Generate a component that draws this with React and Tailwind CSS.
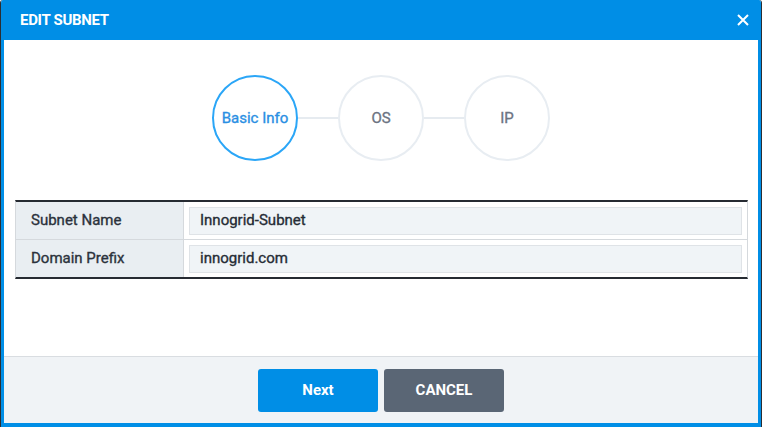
import React from 'react';

const steps = [
  { label: 'Basic Info', active: true },
  { label: 'OS', active: false },
  { label: 'IP', active: false },
];

const fields = [
  { label: 'Subnet Name', value: 'Innogrid-Subnet' },
  { label: 'Domain Prefix', value: 'innogrid.com' },
];

export default function App() {
  return (
    <div
      className="w-[762px] h-[427px] border-x border-[#2a2e33] rounded-t-[3px] overflow-hidden"
      style={{ fontFamily: 'Roboto, "Noto Sans", sans-serif' }}
    >
      <div className="h-full bg-[#008ee6] flex flex-col px-[3px] pb-[4px]">
        {/* header */}
        <div className="h-[40px] shrink-0 flex items-center justify-between pl-[16px] pr-[9px]">
          <span className="text-white text-[15px] font-bold tracking-[-0.3px]">EDIT SUBNET</span>
          <svg width="12" height="12" viewBox="0 0 12 12" className="text-white">
            <path d="M1 1L11 11M11 1L1 11" stroke="currentColor" strokeWidth="2" />
          </svg>
        </div>

        {/* body */}
        <div className="flex-1 bg-white flex flex-col pt-[35px]">
          <div className="flex items-center justify-center">
            {steps.map((s, i) => (
              <React.Fragment key={s.label}>
                {i > 0 && <div className="w-[40px] h-[2px] bg-[#e6ebf0]" />}
                <div
                  className={`w-[86px] h-[86px] rounded-full border-2 flex items-center justify-center text-[15px] font-normal [-webkit-text-stroke:0.35px_currentColor] ${
                    s.active ? 'border-[#2ba6f7] text-[#2a8fe3]' : 'border-[#e8edf2] text-[#6b7382]'
                  }`}
                >
                  {s.label}
                </div>
              </React.Fragment>
            ))}
          </div>

          <div className="mt-[39px] ml-[11px] mr-[10px] border-y-2 border-y-[#262b32] border-x border-x-[#d5d9dd]">
            {fields.map((f, i) => (
              <div key={f.label} className={`flex ${i > 0 ? 'h-[38px] border-t border-[#d5d9dd]' : 'h-[37px]'}`}>
                <div className="w-[168px] shrink-0 bg-[#e9eef2] border-r border-[#d5d9dd] flex items-center pl-[15px] text-[15px] font-normal [-webkit-text-stroke:0.35px_currentColor] text-[#2b323c]">
                  {f.label}
                </div>
                <div className="flex-1 flex items-center px-[5px]">
                  <div className="w-full h-[28px] bg-[#f0f4f7] border border-[#dfe3e7] flex items-center pl-[10px] text-[15px] font-normal [-webkit-text-stroke:0.35px_currentColor] text-[#262d36]">
                    {f.value}
                  </div>
                </div>
              </div>
            ))}
          </div>
        </div>

        {/* footer */}
        <div className="h-[67px] shrink-0 bg-[#f0f3f6] border-t border-[#d9dde1] flex justify-center gap-[6px] pt-[12px]">
          <button className="w-[120px] h-[43px] rounded-[3px] bg-[#008ee6] text-white text-[15px] font-bold">
            Next
          </button>
          <button className="w-[120px] h-[43px] rounded-[3px] bg-[#5a6675] text-white text-[15px] font-bold">
            CANCEL
          </button>
        </div>
      </div>
    </div>
  );
}
